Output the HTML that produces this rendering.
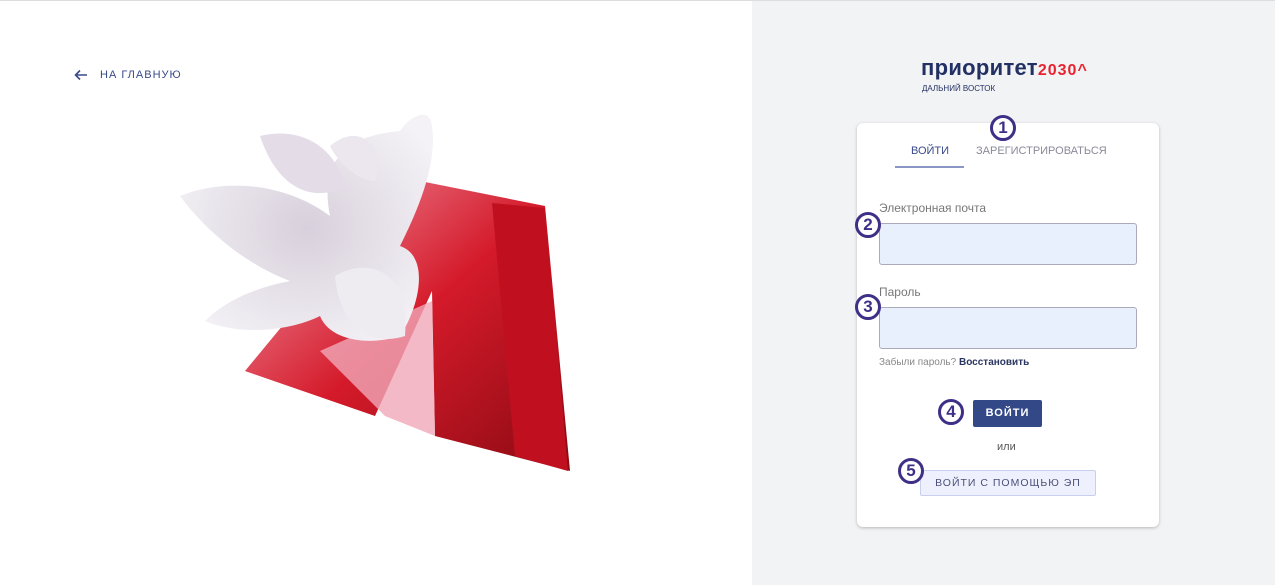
<!DOCTYPE html>
<html><head><meta charset="utf-8"><style>
*{box-sizing:border-box;margin:0;padding:0}
body{width:1275px;height:585px;overflow:hidden;font-family:"Liberation Sans",sans-serif;background:#fff;position:relative}
.left{position:absolute;left:0;top:0;width:752px;height:585px;background:#fff;border-top:1px solid #ddd}
.right{position:absolute;left:752px;top:0;width:523px;height:585px;background:#f2f3f5;border-top:1px solid #ddd}
.back{position:absolute;left:100px;top:68px;font-size:11px;letter-spacing:1px;color:#3a4a8a}
.logo{position:absolute;left:921px;top:55px;font-size:22px;font-weight:bold;color:#233063;letter-spacing:0.3px}
.logo span{color:#e8232f;font-size:16px;letter-spacing:1px}
.sub{position:absolute;left:922px;top:84px;font-size:8px;color:#233063}
.card{position:absolute;left:857px;top:123px;width:302px;height:404px;background:#fff;border-radius:6px;box-shadow:0 1px 3px rgba(0,0,0,.25)}
.t{position:absolute;font-size:11px}
.inp{position:absolute;left:22px;width:258px;height:42px;background:#e8f0fe;border:1px solid #aab;border-radius:3px}
.num{position:absolute;width:26px;height:26px;border:3px solid #3e2f87;border-radius:50%;background:#fff;color:#3e2f87;font-weight:bold;font-size:17px;text-align:center;line-height:20px}
</style></head><body>
<div class="left">
<svg style="position:absolute;left:74px;top:68px" width="14" height="12"><path d="M13 6H2M6 1.5L1.5 6L6 10.5" stroke="#3a4a8a" stroke-width="1.6" fill="none"/></svg>
<div class="back">НА ГЛАВНУЮ</div>
<svg style="position:absolute;left:170px;top:105px" width="410" height="375">
<defs><linearGradient id="r" x1="0" y1="0" x2="1" y2="1"><stop offset="0" stop-color="#f3a0b0"/><stop offset=".5" stop-color="#d41a2a"/><stop offset="1" stop-color="#8a0a12"/></linearGradient>
<radialGradient id="f" cx=".5" cy=".5" r=".6"><stop offset="0" stop-color="#d8d0dc"/><stop offset="1" stop-color="#f4f2f6"/></radialGradient></defs>
<polygon points="250,75 375,100 400,365 265,330 262,185 205,310 75,265 170,150" fill="url(#r)"/>
<polygon points="322,97 375,102 398,365 345,350" fill="#c01020"/>
<polygon points="150,245 262,195 265,330 215,310" fill="#f0a8b8" opacity=".8"/>
<path d="M10,90 C60,70 120,80 160,110 C150,60 170,30 230,25 C240,10 260,0 262,20 C268,60 245,110 230,140 C260,150 250,200 230,230 C200,240 160,235 150,210 C120,225 70,230 35,215 C60,190 95,180 120,175 C80,160 40,130 10,90Z" fill="url(#f)"/>
<path d="M90,30 C130,20 165,40 175,80 C150,95 110,90 90,30Z" fill="#e4dde8"/>
<path d="M160,40 C190,15 215,40 205,75 C190,75 170,60 160,40Z" fill="#ece7ef"/>
<path d="M165,170 C200,150 240,165 235,230 C205,240 170,225 165,170Z" fill="#efecf1"/>
</svg>
</div>
<div class="right"></div>
<div class="logo">приоритет<span>2030^</span></div>
<div class="sub">ДАЛЬНИЙ ВОСТОК</div>
<div class="card">
<div class="t" style="left:54px;top:22px;color:#3a4a8a">ВОЙТИ</div>
<div style="position:absolute;left:38px;top:43px;width:69px;height:2px;background:#8b96c4"></div>
<div class="t" style="left:119px;top:22px;color:#8a8a9a">ЗАРЕГИСТРИРОВАТЬСЯ</div>
<div class="t" style="left:22px;top:78px;color:#777;font-size:12px">Электронная почта</div>
<div class="inp" style="top:100px"></div>
<div class="t" style="left:22px;top:162px;color:#777;font-size:12px">Пароль</div>
<div class="inp" style="top:184px"></div>
<div class="t" style="left:22px;top:234px;color:#888;font-size:10px">Забыли пароль? <b style="color:#2a3560">Восстановить</b></div>
<div style="position:absolute;left:116px;top:277px;width:69px;height:27px;background:#324887;border-radius:2px;color:#fff;font-size:11px;font-weight:bold;letter-spacing:1px;text-align:center;line-height:27px">ВОЙТИ</div>
<div class="t" style="left:140px;top:318px;color:#555">или</div>
<div style="position:absolute;left:63px;top:347px;width:176px;height:26px;background:#eef1fd;border:1px solid #c8d0ee;border-radius:2px;color:#4a5078;font-size:10.5px;letter-spacing:1px;text-align:center;line-height:24px">ВОЙТИ С ПОМОЩЬЮ ЭП</div>
</div>
<div class="num" style="left:990px;top:115px">1</div>
<div class="num" style="left:855px;top:212px">2</div>
<div class="num" style="left:855px;top:294px">3</div>
<div class="num" style="left:938px;top:399px">4</div>
<div class="num" style="left:898px;top:458px">5</div>
</body></html>
